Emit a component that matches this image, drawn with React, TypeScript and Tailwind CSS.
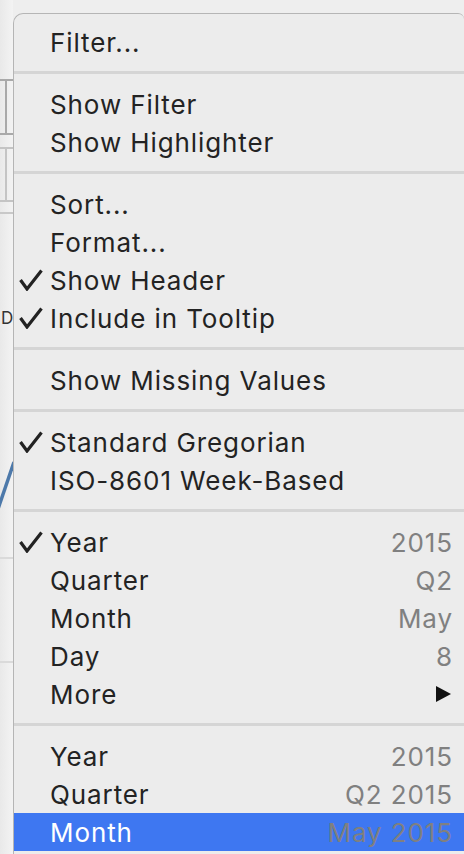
import React from 'react';

type Item = { label: string; checked?: boolean; value?: string; submenu?: boolean; active?: boolean };

const groups: Item[][] = [
    [{ label: 'Filter...' }],
    [{ label: 'Show Filter' }, { label: 'Show Highlighter' }],
    [
        { label: 'Sort...' },
        { label: 'Format...' },
        { label: 'Show Header', checked: true },
        { label: 'Include in Tooltip', checked: true },
    ],
    [{ label: 'Show Missing Values' }],
    [{ label: 'Standard Gregorian', checked: true }, { label: 'ISO-8601 Week-Based' }],
    [
        { label: 'Year', checked: true, value: '2015' },
        { label: 'Quarter', value: 'Q2' },
        { label: 'Month', value: 'May' },
        { label: 'Day', value: '8' },
        { label: 'More', submenu: true },
    ],
    [
        { label: 'Year', value: '2015' },
        { label: 'Quarter', value: 'Q2 2015' },
        { label: 'Month', value: 'May 2015', active: true },
    ],
];

function Check() {
    return (
        <svg width="24" height="22" viewBox="0 0 24 22" className="ml-[5px]">
            <polyline points="1.5,11 8,20 22.5,1.5" fill="none" stroke="#222" strokeWidth="3.2" strokeLinejoin="miter" />
        </svg>
    );
}

function MenuRow({ item }: { item: Item }) {
    return (
        <div className={'flex h-[38px] items-center pr-[11px] ' + (item.active ? 'bg-[#3e77f1]' : '')}>
            <div className="flex w-[36px] shrink-0 items-center">{item.checked && <Check />}</div>
            <span className={'flex-1 ' + (item.active ? 'text-white' : 'text-[#232323]')}>{item.label}</span>
            {item.value && <span className="text-[#808080]">{item.value}</span>}
            {item.submenu && (
                <svg width="16" height="16" viewBox="0 0 16 16" className="mr-[1px]">
                    <polygon points="0,0 15,8 0,16" fill="#111" />
                </svg>
            )}
        </div>
    );
}

function BackgroundStrip() {
    return (
        <div className="flex w-[13px] shrink-0 flex-col bg-gradient-to-r from-[#e9e9e9] to-[#f3f3f3]">
            <div className="h-[79px]" />
            <div className="flex h-[56px] border-y-2 border-[#a9a9a9]">
                <div className="w-[7px] border-r-2 border-[#a9a9a9]" />
            </div>
            <div className="h-[12px]" />
            <div className="flex h-[55px] border-y-2 border-[#c4c4c4]">
                <div className="w-[7px] border-r-2 border-[#c4c4c4]" />
            </div>
            <div className="h-[12px] border-b-2 border-[#c8c8c8]" />
            <div className="h-[92px]" />
            <div className="h-[24px] pl-[1px] font-['Inter',sans-serif] text-[17px] leading-[24px] text-[#333]">D</div>
            <div className="h-[227px]">
                <svg width="13" height="227" viewBox="0 0 13 227">
                    <line x1="-2" y1="179" x2="14" y2="132" stroke="#4d79aa" strokeWidth="3.5" />
                </svg>
            </div>
            <div className="h-[104px] border-t-2 border-[#dadada]" />
            <div className="flex-1 border-t-2 border-[#dadada]" />
        </div>
    );
}

export default function App() {
    return (
        <div className="flex h-[854px] w-[464px] overflow-hidden bg-[#eeeeee] font-['Inter',sans-serif] text-[26px] tracking-[0.9px]">
            <BackgroundStrip />
            <div className="mt-[13px] flex-1 rounded-tl-[10px] rounded-tr-[6px] border-l border-t border-[#b5b5b5] bg-[#ececec] pt-[9px]">
                {groups.map((group, gi) => (
                    <div key={gi}>
                        {gi > 0 && (
                            <div className="h-[24px] pt-[10px]">
                                <div className="h-[3px] bg-[#d5d5d5]" />
                            </div>
                        )}
                        {group.map((item, ii) => (
                            <MenuRow key={ii} item={item} />
                        ))}
                    </div>
                ))}
            </div>
        </div>
    );
}
